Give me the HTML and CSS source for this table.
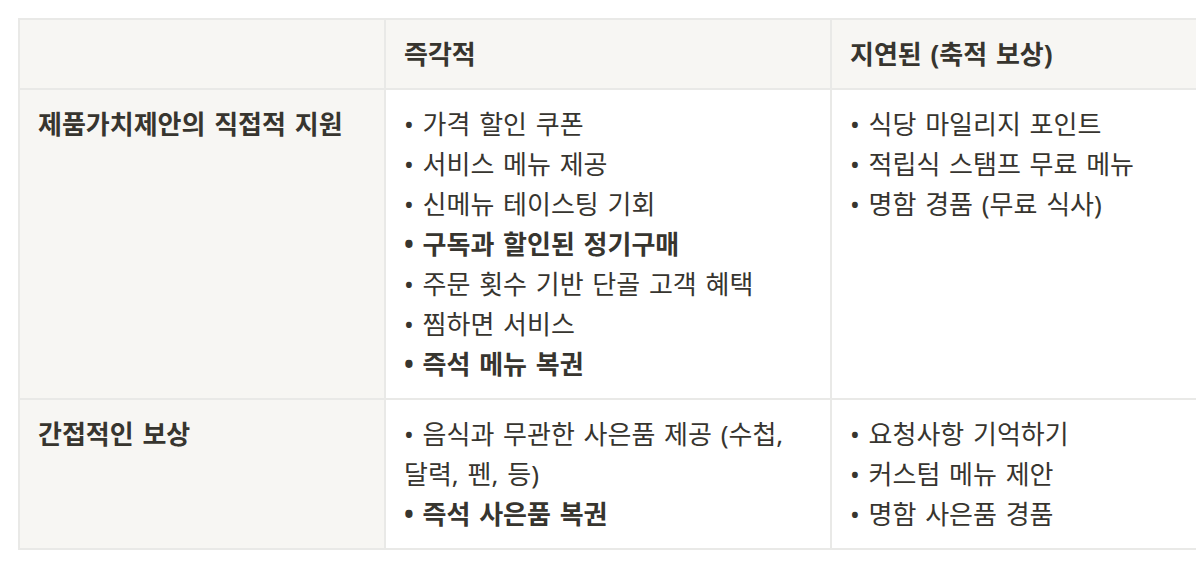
FILE: index.html
```html
<!DOCTYPE html>
<html lang="ko">
<head>
<meta charset="utf-8">
<title>보상 유형</title>
<link rel="stylesheet" href="styles.css">
</head>
<body>
<div class="page">
  <table class="grid">
    <colgroup>
      <col class="c1">
      <col class="c2">
      <col class="c3">
    </colgroup>
    <thead>
      <tr>
        <th class="corner"></th>
        <th>즉각적</th>
        <th>지연된 (축적 보상)</th>
      </tr>
    </thead>
    <tbody>
      <tr>
        <th class="rowhead">제품가치제안의 직접적 지원</th>
        <td>• 가격 할인 쿠폰<br>• 서비스 메뉴 제공<br>• 신메뉴 테이스팅 기회<br><b>• 구독과 할인된 정기구매</b><br>• 주문 횟수 기반 단골 고객 혜택<br>• 찜하면 서비스<br><b>• 즉석 메뉴 복권</b></td>
        <td>• 식당 마일리지 포인트<br>• 적립식 스탬프 무료 메뉴<br>• 명함 경품 (무료 식사)</td>
      </tr>
      <tr>
        <th class="rowhead">간접적인 보상</th>
        <td>• 음식과 무관한 사은품 제공 (수첩, 달력, 펜, 등)<br><b>• 즉석 사은품 복권</b></td>
        <td>• 요청사항 기억하기<br>• 커스텀 메뉴 제안<br>• 명함 사은품 경품</td>
      </tr>
    </tbody>
  </table>
</div>
</body>
</html>
```

FILE: styles.css
```css
html, body {
  margin: 0;
  padding: 0;
  background: #ffffff;
  overflow: hidden;
}

.page {
  padding: 18px;
  font-family: "Noto Sans", "Noto Sans CJK KR", sans-serif;
  color: #37352f;
}

.grid {
  table-layout: fixed;
  width: 1260px;
  border-collapse: separate;
  border-spacing: 2px;
  background: #e9e9e7;
}

.c1 { width: 364px; }
.c2 { width: 444px; }
.c3 { width: 444px; }

.grid th,
.grid td {
  padding: 14px 18px;
  font-size: 26px;
  line-height: 40px;
  text-align: left;
  vertical-align: top;
  background: #ffffff;
  font-weight: 400;
  word-spacing: 2px;
}

.grid thead th {
  background: #f7f6f3;
  font-weight: 700;
}

.grid th.rowhead {
  background: #f7f6f3;
  font-weight: 700;
}

.grid b {
  font-weight: 700;
}
```
